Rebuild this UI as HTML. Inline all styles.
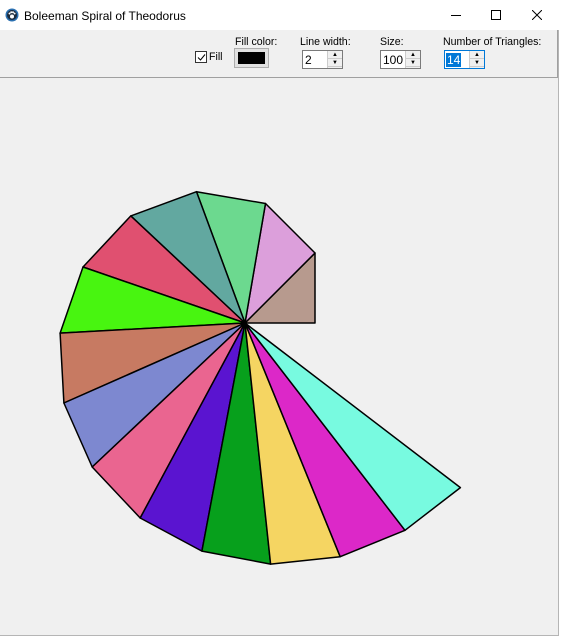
<!DOCTYPE html>
<html><head><meta charset="utf-8"><style>
*{margin:0;padding:0;box-sizing:border-box}
body{width:561px;height:638px;background:#fff;position:relative;overflow:hidden;font-family:"Liberation Sans",sans-serif;font-size:11px;color:#000}
.win{position:absolute;left:0;top:0;width:559px;height:636px;background:#f0f0f0;border-right:1px solid #b5b5b5;border-bottom:1px solid #b5b5b5}
.title{position:absolute;left:0;top:0;width:559px;height:30px;background:#fff}
.title .t{position:absolute;left:24px;top:9px;font-size:12px}
.tb{position:absolute;left:0;top:30px;width:558px;height:48px;border-right:1px solid #a0a0a0;border-bottom:1px solid #a0a0a0;background:#f0f0f0}
.lbl{position:absolute;font-size:10.6px}
.spin{position:absolute;top:50px;height:19px;width:41px;background:#fff;border:1px solid #7a7a7a}
.spin .v{position:absolute;left:2px;top:2px;font-size:12px}
.spin .b{position:absolute;right:0;top:0;width:15px;height:17px;background:#f0f0f0;border-left:1px solid #ccc}
.spin .b div{height:8px;border-bottom:1px solid #ccc;text-align:center;font-size:6px;line-height:8px}
</style></head><body>
<div class="win">
<div class="title">
<svg style="position:absolute;left:5px;top:8px" width="14" height="14" viewBox="0 0 14 14"><circle cx="7" cy="7" r="6.5" fill="#2a6fb0"/><circle cx="7" cy="7" r="5" fill="#1b2a3c"/><circle cx="7" cy="8.5" r="2" fill="#fff"/><circle cx="4.5" cy="5.5" r="1" fill="#fff"/><circle cx="6.2" cy="4.3" r="1" fill="#fff"/><circle cx="8" cy="4.3" r="1" fill="#fff"/><circle cx="9.6" cy="5.5" r="1" fill="#fff"/></svg>
<div class="t">Boleeman Spiral of Theodorus</div>
<div style="position:absolute;left:451px;top:15px;width:10px;height:1px;background:#000"></div>
<div style="position:absolute;left:491px;top:10px;width:10px;height:10px;border:1px solid #000"></div>
<svg style="position:absolute;left:532px;top:10px" width="10" height="10"><path d="M0 0L10 10M10 0L0 10" stroke="#000" stroke-width="1"/></svg>
</div>
<div class="tb"></div>
<div style="position:absolute;left:195px;top:51px;width:12px;height:12px;border:1px solid #333;background:#fff"></div>
<svg style="position:absolute;left:196px;top:52px" width="11" height="11"><path d="M2 5.5L4.5 8L9 2.5" stroke="#000" fill="none" stroke-width="1"/></svg>
<div class="lbl" style="left:209px;top:51px">Fill</div>
<div class="lbl" style="left:235px;top:36px">Fill color:</div>
<div style="position:absolute;left:234px;top:48px;width:35px;height:20px;background:#e1e1e1;border:1px solid #adadad"></div>
<div style="position:absolute;left:238px;top:52px;width:27px;height:12px;background:#000"></div>
<div class="lbl" style="left:300px;top:36px">Line width:</div>
<div class="spin" style="left:302px"><span class="v">2</span><div class="b"><div>▲</div><div>▼</div></div></div>
<div class="lbl" style="left:380px;top:36px">Size:</div>
<div class="spin" style="left:380px"><span class="v">100</span><div class="b"><div>▲</div><div>▼</div></div></div>
<div class="lbl" style="left:443px;top:36px">Number of Triangles:</div>
<div class="spin" style="left:444px;border-color:#0078d7"><span class="v" style="background:#0078d7;color:#fff;left:1px;padding:0 1px">14</span><div class="b"><div>▲</div><div>▼</div></div></div>
<svg style="position:absolute;left:0;top:0" width="561" height="638">
<g stroke="#000" stroke-width="1.5" stroke-linejoin="round">
<polygon points="245,323 315,323 315,253" fill="#b79a8e"/>
<polygon points="245,323 315,253 265.5,203.5" fill="#dc9fdb"/>
<polygon points="245,323 265.5,203.5 196.5,191.7" fill="#6cd98f"/>
<polygon points="245,323 196.5,191.7 130.8,215.9" fill="#62a8a0"/>
<polygon points="245,323 130.8,215.9 83,267" fill="#e05070"/>
<polygon points="245,323 83,267 60.1,333.1" fill="#48f510"/>
<polygon points="245,323 60.1,333.1 63.9,403" fill="#c77a62"/>
<polygon points="245,323 63.9,403 92.2,467" fill="#7d88d0"/>
<polygon points="245,323 92.2,467 140.2,518" fill="#ea6590"/>
<polygon points="245,323 140.2,518 201.9,551.1" fill="#5a14d0"/>
<polygon points="245,323 201.9,551.1 270.6,564.1" fill="#07a01c"/>
<polygon points="245,323 270.6,564.1 340.2,556.7" fill="#f5d562"/>
<polygon points="245,323 340.2,556.7 405,530.3" fill="#dc28c8"/>
<polygon points="245,323 405,530.3 460.4,487.6" fill="#78fae0"/>
</g></svg>
</div>
</body></html>
